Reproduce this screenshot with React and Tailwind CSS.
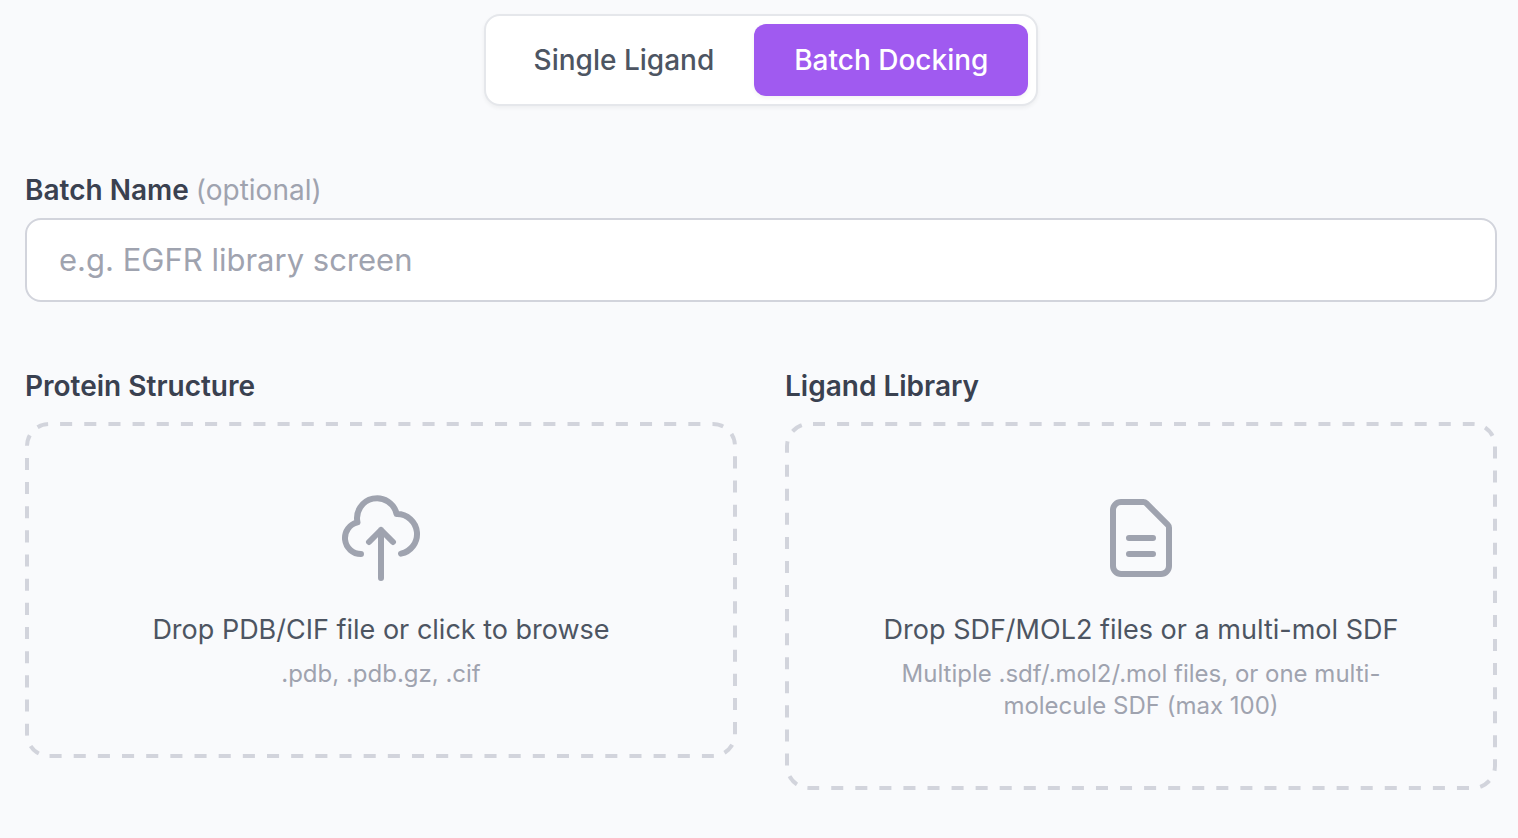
import React, { useState } from 'react';

const MODES = [
  { id: 'single', label: 'Single Ligand' },
  { id: 'batch', label: 'Batch Docking' },
];

const CloudUploadIcon = () => (
  <svg className="w-24 h-24 text-[#9fa3af]" fill="none" viewBox="0 0 24 24" stroke="currentColor" strokeWidth="1.5" aria-hidden="true">
    <path strokeLinecap="round" strokeLinejoin="round" d="M7 16a4 4 0 01-.88-7.903A5 5 0 1115.9 6L16 6a5 5 0 011 9.9M15 13l-3-3m0 0l-3 3m3-3v12" />
  </svg>
);

const DocumentIcon = () => (
  <svg className="w-24 h-24 text-[#9fa3af]" fill="none" viewBox="0 0 24 24" stroke="currentColor" strokeWidth="1.5" aria-hidden="true">
    <path strokeLinecap="round" strokeLinejoin="round" d="M9 12h6m-6 4h6m2 5H7a2 2 0 01-2-2V5a2 2 0 012-2h5.586a1 1 0 01.707.293l5.414 5.414a1 1 0 01.293.707V19a2 2 0 01-2 2z" />
  </svg>
);

// Wide-dash outline; the parent clips the outer half of the stroke
const DashedOutline = ({ dashes, start }) => (
  <svg className="absolute inset-0 w-full h-full text-[#d2d4dc] pointer-events-none" fill="none" aria-hidden="true">
    <rect
      width="100%"
      height="100%"
      rx="24"
      stroke="currentColor"
      strokeWidth="8"
      pathLength={dashes * 24}
      strokeDasharray="12 12"
      strokeDashoffset={-start}
    />
  </svg>
);

const DropZone = ({ id, title, icon, text, hint, accept, multiple, dashes, dashStart }) => {
  const [files, setFiles] = useState([]);

  const handleDrop = (e) => {
    e.preventDefault();
    setFiles(Array.from(e.dataTransfer.files));
  };

  return (
    <div>
      <label htmlFor={id} className="block mb-4 text-[28px] leading-10 font-semibold text-[#3a4150]">
        {title}
      </label>
      <label
        htmlFor={id}
        onDragOver={(e) => e.preventDefault()}
        onDrop={handleDrop}
        className="relative overflow-hidden flex flex-col items-center p-[68px] text-center rounded-3xl cursor-pointer"
      >
        <DashedOutline dashes={dashes} start={dashStart} />
        {icon}
        <span className="mt-6 text-[27px] leading-10 text-[#4d5562]">
          {files.length > 0 ? files.map((f) => f.name).join(', ') : text}
        </span>
        <span className="mt-2 text-2xl leading-8 text-[#9fa3af]">{hint}</span>
      </label>
      <input
        id={id}
        type="file"
        accept={accept}
        multiple={multiple}
        className="sr-only"
        onChange={(e) => setFiles(Array.from(e.target.files))}
      />
    </div>
  );
};

const App = () => {
  const [mode, setMode] = useState('batch');
  const [batchName, setBatchName] = useState('');

  return (
    <main className="min-h-screen bg-[#f9fafc] pt-[14px] pb-12 pl-[25px] pr-[21px] font-['Inter',sans-serif]">
      {/* Mode toggle */}
      <div className="flex justify-center mb-16">
        <div className="flex p-2 bg-white border-2 border-[#e5e7eb] rounded-2xl shadow-[0_2px_4px_rgba(0,0,0,0.05)]">
          {MODES.map((m) => (
            <button
              key={m.id}
              type="button"
              aria-pressed={mode === m.id}
              onClick={() => setMode(m.id)}
              className={`px-10 py-4 text-[28px] leading-10 font-medium rounded-xl cursor-pointer ${
                mode === m.id ? 'bg-[#a05af0] text-white shadow-[0_2px_4px_rgba(0,0,0,0.05)]' : 'text-[#4d5562]'
              }`}
            >
              {m.label}
            </button>
          ))}
        </div>
      </div>

      {/* Batch name */}
      <div className="mb-16">
        <label htmlFor="batch-name" className="block mb-2 text-[28px] leading-10 font-semibold text-[#3a4150]">
          Batch Name <span className="font-normal text-[#9fa3af]">(optional)</span>
        </label>
        <input
          id="batch-name"
          type="text"
          value={batchName}
          onChange={(e) => setBatchName(e.target.value)}
          placeholder="e.g. EGFR library screen"
          className="block w-full px-8 py-4 text-[31px] leading-[48px] bg-white border-2 border-[#d2d4dc] rounded-2xl text-[#3a4150] placeholder:text-[#9fa3af]"
        />
      </div>

      {/* Uploads */}
      <div className="grid grid-cols-2 gap-12 items-start">
        <DropZone
          id="protein-file"
          title="Protein Structure"
          icon={<CloudUploadIcon />}
          text="Drop PDB/CIF file or click to browse"
          hint=".pdb, .pdb.gz, .cif"
          accept=".pdb,.gz,.cif"
          dashes={85}
          dashStart={11}
        />
        <DropZone
          id="ligand-files"
          title="Ligand Library"
          icon={<DocumentIcon />}
          text="Drop SDF/MOL2 files or a multi-mol SDF"
          hint="Multiple .sdf/.mol2/.mol files, or one multi-molecule SDF (max 100)"
          accept=".sdf,.mol2,.mol"
          multiple
          dashes={88}
          dashStart={4}
        />
      </div>
    </main>
  );
};

export default App;
